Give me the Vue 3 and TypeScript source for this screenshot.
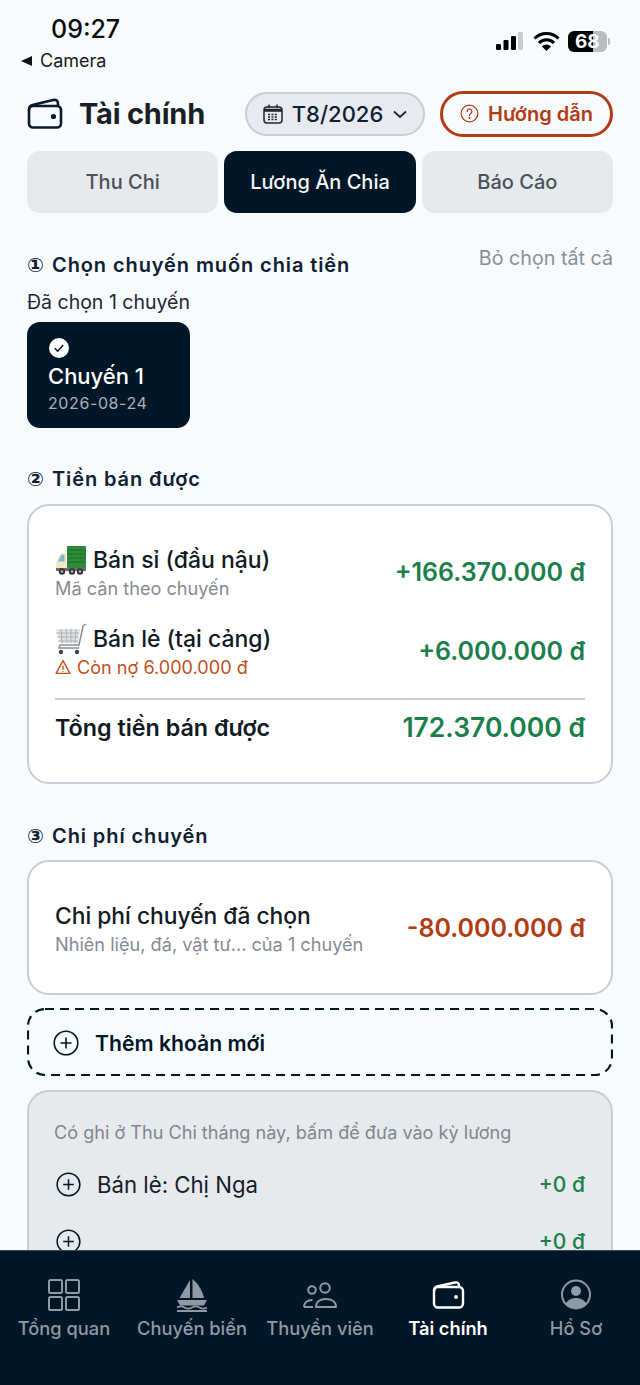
<template>
  <div class="screen">
    <div class="status">
      <div class="status-left">
        <div class="time">09:27</div>
        <div class="back"><span class="back-arrow"></span>Camera</div>
      </div>
      <div class="status-right">
        <svg width="27" height="18" viewBox="0 0 27 18">
          <rect x="0" y="12" width="5" height="6" rx="1.200" fill="#000" />
          <rect x="7.500" y="8" width="5" height="10" rx="1.200" fill="#000" />
          <rect x="15" y="4" width="5" height="14" rx="1.200" fill="#000" />
          <rect x="22" y="0" width="5" height="18" rx="1.200" fill="#c9cccf" />
        </svg>
        <svg width="27" height="19" viewBox="0 0 27 19">
          <path d="M1.500 6.500a17 17 0 0 1 24 0" fill="none" stroke="#000" stroke-width="3" />
          <path d="M6 11a10.500 10.500 0 0 1 15 0" fill="none" stroke="#000" stroke-width="3" />
          <path d="M13.500 19l-4.600-4.600a6.500 6.500 0 0 1 9.200 0z" fill="#000" />
        </svg>
        <div class="battery">68</div>
        <span class="battery-nub"></span>
      </div>
    </div>

    <header class="head">
      <div class="brand">
        <svg class="wallet" width="36" height="36" viewBox="0 0 36 36" fill="none" stroke="#0a1a2c" stroke-width="2.600" stroke-linejoin="round" stroke-linecap="round">
          <path d="M2 14c0-3 1-4.500 3.500-5L26 4c3-.6 5 .6 5 3.500V10" />
          <rect x="2" y="10" width="32" height="21.500" rx="4" />
          <circle cx="26.500" cy="20.500" r="1.300" fill="#0a1a2c" />
        </svg>
        <h1 class="title">Tài chính</h1>
      </div>
      <button class="month">
        <svg width="20" height="20" viewBox="0 0 20 20" fill="none" stroke="#1c2733" stroke-width="1.500">
          <rect x="1" y="3" width="18" height="16" rx="3" />
          <path d="M1 5.500h18M1 7h18M6 .5v3.500M14 .5v3.500" />
          <path d="M5 10.500h10M5 13h10M5 15.500h10" stroke-dasharray="2 1.400" />
        </svg>
        <span>T8/2026</span>
        <svg class="chevron" width="14" height="14" viewBox="0 0 14 14" fill="none" stroke="#1c2733" stroke-width="1.700">
          <path d="M1 4.500l6 5.500 6-5.500" />
        </svg>
      </button>
      <button class="guide">
        <svg width="19" height="19" viewBox="0 0 20 20" fill="none" stroke="#b33a12" stroke-width="1.300" stroke-linecap="round">
          <circle cx="10" cy="10" r="8.800" />
          <path d="M7.500 7.800a2.500 2.500 0 1 1 3.900 2c-1 .7-1.400 1.200-1.400 2.200" />
          <circle cx="10" cy="14.600" r=".5" />
        </svg>
        <span>Hướng dẫn</span>
      </button>
    </header>

    <nav class="tabs">
      <div v-for="tab in tabs" :key="tab" class="tab" :class="{ active: tab === 'Lương Ăn Chia' }">{{ tab }}</div>
    </nav>

    <main class="content">
      <div class="section-row">
        <h2 class="section-title"><span class="num">①</span>Chọn chuyến muốn chia tiền</h2>
        <span class="clear">Bỏ chọn tất cả</span>
      </div>
      <div class="picked">Đã chọn 1 chuyến</div>
      <div class="trip">
        <svg width="20" height="20" viewBox="0 0 20 20">
          <circle cx="10" cy="10" r="10" fill="#fff" />
          <path d="M5.800 10.300l2.900 2.900 5.500-6.200" fill="none" stroke="#011627" stroke-width="1.500" />
        </svg>
        <div class="trip-name">Chuyến 1</div>
        <div class="trip-date">2026-08-24</div>
      </div>

      <h2 class="section-title second"><span class="num">②</span>Tiền bán được</h2>
      <section class="card sales">
        <div class="line">
          <div>
            <div class="line-name">
              <svg class="emoji" width="32" height="32" viewBox="0 0 32 32">
                <rect x="12" y="2" width="19" height="22" fill="#2f8b3a" />
                <path d="M12 6h19M12 10h19M12 14h19M12 18h19" stroke="#1d6b2a" stroke-width="1" />
                <path d="M11 9H6L1 18v8h11z" fill="#efe6c8" />
                <path d="M9.500 11H6.500L3 17.500h6.500z" fill="#7fb6c9" />
                <rect x="1" y="24" width="30" height="3" fill="#6b6b6b" />
                <circle cx="7" cy="27.500" r="3.200" fill="#333" />
                <circle cx="17" cy="27.500" r="3.200" fill="#333" />
                <circle cx="25" cy="27.500" r="3.200" fill="#333" />
                <circle cx="7" cy="27.500" r="1.200" fill="#bbb" />
                <circle cx="17" cy="27.500" r="1.200" fill="#bbb" />
                <circle cx="25" cy="27.500" r="1.200" fill="#bbb" />
              </svg>
              <span>Bán sỉ (đầu nậu)</span>
            </div>
            <div class="hint">Mã cân theo chuyến</div>
          </div>
          <div class="amount plus">+166.370.000 đ</div>
        </div>
        <div class="line">
          <div>
            <div class="line-name">
              <svg class="emoji" width="32" height="32" viewBox="0 0 32 32" fill="none">
                <path d="M1 6h24l-2 14H5z" fill="#dfe2e4" />
                <path d="M1 10h23M2 14h21M3 18h20M6 6l1 14M11 6l1 14M16 6v14M21 6l-1 14" stroke="#a4a8ad" stroke-width=".8" />
                <path d="M31 1l-3 2-4 19H5l-1 3h20" stroke="#8a8e93" stroke-width="1.500" />
                <circle cx="6" cy="29" r="2.200" fill="#444" />
                <circle cx="22" cy="29" r="2.200" fill="#444" />
              </svg>
              <span>Bán lẻ (tại cảng)</span>
            </div>
            <div class="debt">
              <svg width="16" height="16" viewBox="0 0 15 15" fill="none" stroke="#c2501c" stroke-width="1.300" stroke-linejoin="round">
                <path d="M7.500 1.500L14 13.500H1z" />
                <path d="M7.500 6v4M7.500 11.200v.8" />
              </svg>
              <span>Còn nợ 6.000.000 đ</span>
            </div>
          </div>
          <div class="amount plus">+6.000.000 đ</div>
        </div>
        <div class="total">
          <span class="total-name">Tổng tiền bán được</span>
          <span class="amount plus big">172.370.000 đ</span>
        </div>
      </section>

      <h2 class="section-title third"><span class="num">③</span>Chi phí chuyến</h2>
      <section class="card cost">
        <div>
          <div class="cost-name">Chi phí chuyến đã chọn</div>
          <div class="hint">Nhiên liệu, đá, vật tư... của 1 chuyến</div>
        </div>
        <div class="amount minus">-80.000.000 đ</div>
      </section>

      <button class="add-new">
        <svg class="dash" width="586" height="68" viewBox="0 0 586 68" fill="none">
          <rect x="1" y="1" width="584" height="66" rx="17" stroke="#011627" stroke-width="2.200" stroke-dasharray="9 6" />
        </svg>
        <svg width="26" height="26" viewBox="0 0 26 26" fill="none" stroke="#011627" stroke-width="1.600">
          <circle cx="13" cy="13" r="11.800" />
          <path d="M13 7.500v11M7.500 13h11" />
        </svg>
        <span>Thêm khoản mới</span>
      </button>

      <section class="extras">
        <div class="extras-note">Có ghi ở Thu Chi tháng này, bấm để đưa vào kỳ lương</div>
        <div v-for="(row, i) in extras" :key="i" class="extra-row">
          <svg width="25" height="25" viewBox="0 0 26 26" fill="none" stroke="#011627" stroke-width="1.600">
            <circle cx="13" cy="13" r="11.800" />
            <path d="M13 7.500v11M7.500 13h11" />
          </svg>
          <span class="extra-name">{{ row.name }}</span>
          <span class="extra-amount">{{ row.amount }}</span>
        </div>
      </section>
    </main>

    <footer class="bottom">
      <div v-for="item in navItems" :key="item.label" class="nav-item" :class="{ current: item.label === 'Tài chính' }">
        <svg width="38" height="38" viewBox="0 0 38 38" fill="none" stroke="currentColor" stroke-width="2" v-html="item.icon"></svg>
        <span>{{ item.label }}</span>
      </div>
    </footer>
  </div>
</template>

<script setup lang="ts">
interface NavItem {
  label: string
  icon: string
}

interface ExtraRow {
  name: string
  amount: string
}

const tabs = ['Thu Chi', 'Lương Ăn Chia', 'Báo Cáo']

const extras: ExtraRow[] = [
  { name: 'Bán lẻ: Chị Nga', amount: '+0 đ' },
  { name: '', amount: '+0 đ' },
]

const navItems: NavItem[] = [
  {
    label: 'Tổng quan',
    icon: '<rect x="4" y="3" width="13" height="13" rx="1.500"/><rect x="21" y="3" width="13" height="13" rx="1.500"/><rect x="4" y="20" width="13" height="13" rx="1.500"/><rect x="21" y="20" width="13" height="13" rx="1.500"/>',
  },
  {
    label: 'Chuyến biển',
    icon: '<path d="M17 3v18H6.500z" fill="currentColor" stroke="none"/><path d="M19.500 2c6 5 10 12 11.500 19H19.500z" fill="currentColor" stroke="none"/><path d="M4 23h30l-3 5.500H7z" fill="currentColor" stroke="none"/><path d="M4 30.500c2.500-1.500 5-1.500 7.500 0s5 1.500 7.500 0 5-1.500 7.500 0 5 1.500 7.500 0M4 34h30" stroke-width="1.800"/>',
  },
  {
    label: 'Thuyền viên',
    icon: '<circle cx="11" cy="13" r="3.800"/><circle cx="24" cy="11" r="4.800"/><path d="M3 30c0-4 3-7 8.500-7M3 30h9"/><path d="M15 30c0-5 4-8 10-8s10 3 10 8z" stroke-linejoin="round"/>',
  },
  {
    label: 'Tài chính',
    icon: '<path d="M5 14c0-2.500 1-4 3-4.500L26 5.500c2.600-.6 4 .5 4 3V10" stroke-linejoin="round" stroke-width="2.400"/><rect x="5" y="10" width="29" height="20.500" rx="4" stroke-width="2.400"/><circle cx="27" cy="20" r="1.900" fill="currentColor" stroke="none"/>',
  },
  {
    label: 'Hồ Sơ',
    icon: '<circle cx="19" cy="17.500" r="14"/><circle cx="19" cy="14" r="5" fill="currentColor" stroke="none"/><path d="M8.500 27c2-4 6-6 10.500-6s8.500 2 10.500 6c-2.500 2.500-6.500 4.500-10.500 4.500s-8-2-10.500-4.500z" fill="currentColor" stroke="none"/>',
  },
]
</script>

<style>
html,
body {
  margin: 0;
  background: #f7fbfe;
}
</style>

<style scoped>
.screen {
  width: 640px;
  height: 1385px;
  display: flex;
  flex-direction: column;
  overflow: hidden;
  background: #f7fbfe;
  color: #011627;
  font-family: Inter, "Liberation Sans", sans-serif;
}

.status {
  height: 83px;
  flex: none;
  box-sizing: border-box;
  padding: 14px 30px 0 21px;
  display: flex;
  justify-content: space-between;
}

.time {
  margin-left: 30px;
  font-size: 25px;
  line-height: 30px;
  font-weight: 500;
  color: #0a0a0a;
}

.back {
  display: flex;
  align-items: center;
  gap: 8px;
  margin-top: 5px;
  font-size: 18px;
  line-height: 24px;
  color: #1a1a1a;
}

.back-arrow {
  width: 0;
  height: 0;
  border-top: 5.500px solid transparent;
  border-bottom: 5.500px solid transparent;
  border-right: 11px solid #111;
}

.status-right {
  display: flex;
  align-items: center;
  height: 22px;
  margin-top: 16px;
}

.status-right svg:first-child {
  margin-right: 10px;
}

.status-right svg:nth-child(2) {
  margin-right: 8px;
}

.battery {
  width: 39px;
  height: 21px;
  box-sizing: border-box;
  padding-left: 7px;
  border-radius: 6px;
  background: linear-gradient(90deg, #000 64%, #b9bcbe 64%);
  color: #fff;
  font-size: 19px;
  line-height: 21px;
  font-weight: 700;
  white-space: nowrap;
}

.battery-nub {
  width: 2px;
  height: 7px;
  margin-left: 1px;
  border-radius: 0 2px 2px 0;
  background: #b9bcbe;
}

.head {
  height: 68px;
  flex: none;
  box-sizing: border-box;
  display: flex;
  align-items: center;
  padding: 0 27px 7px;
}

.brand {
  display: flex;
  align-items: center;
  gap: 16px;
  flex: 1;
}

.title {
  margin: 0;
  font-size: 29px;
  font-weight: 700;
  color: #1a1f25;
  letter-spacing: -0.2px;
}

.month,
.guide {
  display: flex;
  align-items: center;
  justify-content: center;
  font-family: inherit;
  box-sizing: border-box;
  padding: 0;
}

.month {
  width: 180px;
  height: 44px;
  gap: 9px;
  margin-right: 15px;
  border-radius: 22px;
  background: #e7eaee;
  border: 2px solid #c9ced4;
  color: #0f2033;
  font-size: 22px;
  font-weight: 500;
}

.chevron {
  margin-left: 1px;
}

.guide {
  width: 173px;
  height: 46px;
  gap: 9px;
  border-radius: 23px;
  background: transparent;
  border: 3px solid #b33a12;
  color: #b33a12;
  font-size: 20px;
  font-weight: 600;
}

.tabs {
  flex: none;
  display: grid;
  grid-template-columns: repeat(3, 1fr);
  gap: 6px;
  padding: 0 27px;
}

.tab {
  height: 62px;
  display: flex;
  align-items: center;
  justify-content: center;
  border-radius: 13px;
  background: #e7eaec;
  color: #4a525c;
  font-size: 20px;
  font-weight: 500;
}

.tab.active {
  background: #011627;
  color: #f4f6f8;
}

.content {
  flex: 1;
  min-height: 0;
  overflow: hidden;
  padding: 38px 27px 0;
}

.section-row {
  display: flex;
  justify-content: space-between;
  align-items: flex-start;
}

.section-title {
  margin: 0;
  display: flex;
  align-items: center;
  font-size: 20px;
  line-height: 28px;
  font-weight: 600;
  letter-spacing: 0.9px;
  color: #0f2033;
}

.num {
  width: 25px;
  font-family: "DejaVu Sans", sans-serif;
  font-size: 20px;
  letter-spacing: 0;
  font-weight: 700;
}

.clear {
  margin-top: -7px;
  font-size: 19.700px;
  line-height: 28px;
  color: #8a9099;
}

.picked {
  margin-top: 10px;
  font-size: 19.500px;
  line-height: 26px;
  color: #1c2733;
}

.trip {
  width: 163px;
  height: 106px;
  box-sizing: border-box;
  margin-top: 7px;
  padding: 16px 21px 0;
  border-radius: 13px;
  background: #011627;
  color: #fff;
}

.trip svg {
  display: block;
  margin-left: 1px;
}

.trip-name {
  margin-top: 4px;
  font-size: 22px;
  line-height: 28px;
  font-weight: 500;
}

.trip-date {
  margin-top: 2px;
  font-size: 16px;
  line-height: 22px;
  letter-spacing: 0.6px;
  color: #a9b0b8;
}

.second {
  margin-top: 37px;
}

.card {
  background: #fff;
  border: 2px solid #c9ced4;
  border-radius: 22px;
  box-sizing: border-box;
  padding: 0 26px;
}

.sales {
  height: 280px;
  margin-top: 11px;
  padding-top: 26px;
}

.line {
  height: 79px;
  display: flex;
  justify-content: space-between;
  align-items: center;
}

.line-name {
  display: flex;
  align-items: center;
  gap: 6px;
  font-size: 23px;
  line-height: 32px;
  font-weight: 500;
  color: #111a22;
}

.hint {
  font-size: 18.150px;
  line-height: 24px;
  color: #858b93;
}

.debt {
  display: flex;
  align-items: center;
  gap: 6px;
  font-size: 18.100px;
  line-height: 24px;
  color: #c2501c;
}

.amount {
  font-size: 25px;
  font-weight: 600;
  white-space: nowrap;
}

.amount.big {
  font-size: 26.500px;
}

.plus {
  color: #1b7f4b;
}

.minus {
  color: #b33a12;
}

.total {
  height: 54px;
  display: flex;
  justify-content: space-between;
  align-items: center;
  margin-top: 8px;
  border-top: 2px solid #c9ced4;
}

.total-name {
  font-size: 23.300px;
  font-weight: 600;
  color: #111a22;
}

.third {
  margin-top: 38px;
}

.cost {
  height: 135px;
  margin-top: 10px;
  display: flex;
  justify-content: space-between;
  align-items: center;
}

.cost-name {
  font-size: 22.800px;
  line-height: 32px;
  font-weight: 500;
  color: #111a22;
}

.add-new {
  position: relative;
  width: 100%;
  height: 68px;
  margin-top: 13px;
  box-sizing: border-box;
  padding: 2px 26px 0;
  display: flex;
  align-items: center;
  gap: 16px;
  background: transparent;
  border: none;
  font-family: inherit;
  font-size: 21.200px;
  font-weight: 600;
  color: #011627;
}

.dash {
  position: absolute;
  left: 0;
  top: 0;
}

.extras {
  margin-top: 14px;
  height: 260px;
  box-sizing: border-box;
  padding: 27px 26px 0 25px;
  background: #e7eaec;
  border: 2px solid #c9ced4;
  border-radius: 22px;
}

.extras-note {
  font-size: 18.100px;
  line-height: 26px;
  color: #7f868f;
}

.extra-row {
  height: 57px;
  display: flex;
  align-items: center;
  gap: 16px;
  padding-left: 2px;
}

.extras-note + .extra-row {
  margin-top: 11px;
}

.extra-name {
  flex: 1;
  font-size: 22.200px;
  color: #14202c;
}

.extra-amount {
  font-size: 21px;
  font-weight: 500;
  color: #1b7f4b;
}

.bottom {
  height: 135px;
  flex: none;
  box-sizing: border-box;
  padding-top: 26px;
  display: grid;
  grid-template-columns: repeat(5, 1fr);
  background: #011627;
  border-top: 1px solid #3b4956;
}

.nav-item {
  display: flex;
  flex-direction: column;
  align-items: center;
  color: #8f99a3;
  font-size: 18.300px;
  line-height: 26px;
  font-weight: 500;
  white-space: nowrap;
}

.nav-item.current {
  color: #fff;
  font-weight: 600;
}
</style>
